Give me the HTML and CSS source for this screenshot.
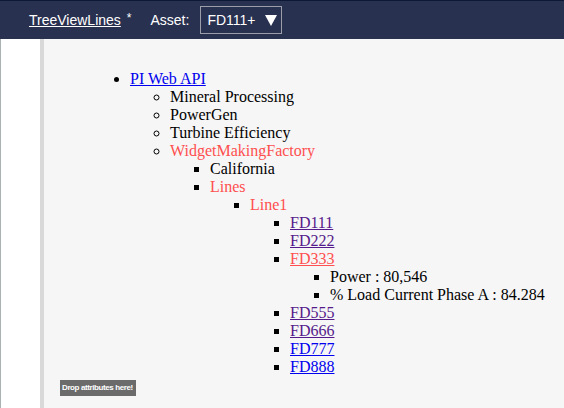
FILE: index.html
```html
<!DOCTYPE html>
<html>
<head>
<meta charset="utf-8">
<link rel="stylesheet" href="styles.css">
</head>
<body>
<header class="topbar">
  <a class="title" href="#">TreeViewLines</a>
  <span class="star">*</span>
  <span class="asset-label">Asset:</span>
  <div class="asset-select">
    <span class="asset-value">FD111+</span>
    <svg class="arrow" width="12" height="11" viewBox="0 0 12 11"><polygon points="0,0 12,0 6,11" fill="#fff"/></svg>
  </div>
</header>
<div class="main">
  <aside class="side"></aside>
  <div class="splitter"></div>
  <section class="content">
    <ul class="tree">
      <li><a class="link" href="#">PI Web API</a>
        <ul>
          <li>Mineral Processing</li>
          <li>PowerGen</li>
          <li>Turbine Efficiency</li>
          <li><span class="sel">WidgetMakingFactory</span>
            <ul>
              <li>California</li>
              <li><span class="sel">Lines</span>
                <ul>
                  <li><span class="sel">Line1</span>
                    <ul>
                      <li><a class="visited" href="#">FD111</a></li>
                      <li><a class="visited" href="#">FD222</a></li>
                      <li><a class="sel-link" href="#">FD333</a>
                        <ul>
                          <li>Power : 80,546</li>
                          <li>% Load Current Phase A : 84.284</li>
                        </ul>
                      </li>
                      <li><a class="visited" href="#">FD555</a></li>
                      <li><a class="visited" href="#">FD666</a></li>
                      <li><a class="link" href="#">FD777</a></li>
                      <li><a class="link" href="#">FD888</a></li>
                    </ul>
                  </li>
                </ul>
              </li>
            </ul>
          </li>
        </ul>
      </li>
    </ul>
    <div class="drop">Drop attributes here!</div>
  </section>
</div>
</body>
</html>
```

FILE: styles.css
```css
html, body {
  height: 100%;
}
body {
  margin: 0;
  display: flex;
  flex-direction: column;
  font-family: "Liberation Serif", "Times New Roman", serif;
  font-size: 16px;
  overflow: hidden;
}
.topbar {
  height: 38px;
  flex: 0 0 auto;
  background: #293150;
  border-top: 1px solid #0d1836;
  display: flex;
  align-items: center;
  padding-left: 29px;
  font-family: "Liberation Sans", Arial, sans-serif;
  font-size: 14px;
  color: #fff;
}
.title {
  color: #fff;
  text-decoration: underline;
}
.star {
  margin-left: 6px;
  font-size: 12px;
  position: relative;
  top: -2px;
}
.asset-label {
  margin-left: 19px;
}
.asset-select {
  margin-left: 11px;
  height: 26px;
  width: 74px;
  border: 1px solid #9b9ea8;
  display: flex;
  align-items: center;
  padding-left: 6px;
}
.asset-value {
  font-size: 14px;
}
.arrow {
  margin-left: 9px;
  margin-top: 1px;
}
.main {
  flex: 1 1 auto;
  display: flex;
  min-height: 0;
}
.side {
  width: 39px;
  background: #fff;
  border-left: 1px solid #aab3b1;
}
.splitter {
  width: 4px;
  background: #d9d9d9;
}
.content {
  flex: 1 1 auto;
  background: #f6f6f6;
  padding-top: 31px;
  padding-left: 16px;
}
.tree {
  margin: 0 0 0 30px;
  line-height: 18px;
  color: #000;
}
.tree ul {
  margin: 0;
}
.link {
  color: #0000ee;
}
.visited {
  color: #551a8b;
}
.sel {
  color: #ff4f4f;
}
.sel-link {
  color: #ff4f4f;
}
.drop {
  display: inline-block;
  margin-top: 4px;
  background: #6b6b6b;
  color: #fff;
  font-family: "Liberation Sans", Arial, sans-serif;
  font-weight: bold;
  font-size: 8px;
  letter-spacing: -0.4px;
  line-height: 16px;
  height: 16px;
  padding: 0 3px 0 2px;
}
```
